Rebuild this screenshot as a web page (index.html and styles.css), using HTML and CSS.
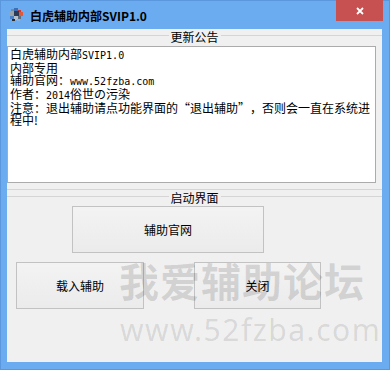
FILE: index.html
```html
<!DOCTYPE html>
<html lang="zh-CN">
<head>
  <meta charset="UTF-8" />
  <title>白虎辅助内部SVIP1.0</title>
  <link rel="stylesheet" href="styles.css">
</head>
<body>

  <div class="window">
    <div class="titlebar">
      <svg class="app-icon" width="16" height="16" viewBox="0 0 16 16">
        <rect x="3" y="2" width="3" height="2" fill="#7a8a99"/>
        <rect x="6" y="1" width="4" height="3" fill="#3b6fb5"/>
        <rect x="10" y="3" width="3" height="2" fill="#c43a3a"/>
        <rect x="1" y="5" width="5" height="4" fill="#9aa4ad"/>
        <rect x="6" y="4" width="5" height="5" fill="#2d3b55"/>
        <rect x="11" y="5" width="4" height="4" fill="#e05a3a"/>
        <rect x="2" y="9" width="4" height="3" fill="#4a83c9"/>
        <rect x="6" y="9" width="4" height="4" fill="#b8c2cc"/>
        <rect x="10" y="9" width="3" height="3" fill="#5d6b7a"/>
        <rect x="4" y="12" width="3" height="2" fill="#2b2b2b"/>
        <rect x="9" y="12" width="3" height="2" fill="#8fb3e0"/>
      </svg>
      <span class="title">白虎辅助内部SVIP1.0</span>
      <div class="close-box">
        <svg width="8" height="8" viewBox="0 0 8 8">
          <path d="M1 1 L7 7 M7 1 L1 7" stroke="#fff" stroke-width="1.8"/>
        </svg>
      </div>
    </div>

    <div class="client">
      <div class="group group-notice">
        <div class="group-head"><span>更新公告</span></div>
        <div class="notice">白虎辅助内部<span class="en">SVIP1.0</span>
内部专用
辅助官网：<span class="en">www.52fzba.com</span>
作者：<span class="en">2014</span>俗世の污染
注意：退出辅助请点功能界面的“退出辅助”，否则会一直在系统进
程中!</div>
      </div>

      <div class="group group-start">
        <div class="group-head"><span>启动界面</span></div>
        <button class="btn btn-site">辅助官网</button>
        <div class="btn-row">
          <button class="btn btn-load">载入辅助</button>
          <button class="btn btn-close">关闭</button>
        </div>
      </div>

      <div class="watermark">
        <div class="wm-name">我爱辅助论坛</div>
        <div class="wm-url">www.52fzba.com</div>
      </div>
    </div>
  </div>

</body>
</html>
```

FILE: styles.css
```css
* {
  box-sizing: border-box;
}

body {
  margin: 0;
  font-family: "Noto Sans CJK SC", sans-serif;
  font-size: 12px;
  color: #000;
  text-spacing-trim: space-all;
}

.window {
  width: 390px;
  height: 370px;
  border: 1px solid #5b97dd;
  background: #6babf0;
  padding: 0 7px 7px 6px;
  display: flex;
  flex-direction: column;
}

.titlebar {
  height: 28px;
  flex-shrink: 0;
  display: flex;
  align-items: center;
}

.app-icon {
  margin-left: 1px;
  margin-top: -1px;
}

.title {
  margin-left: 6px;
  font-size: 12px;
  font-weight: bold;
  line-height: 14px;
  margin-top: 2px;
}

.close-box {
  margin-left: auto;
  margin-right: -1px;
  align-self: flex-start;
  margin-top: -1px;
  width: 47px;
  height: 21px;
  background: #c75050;
  display: flex;
  align-items: center;
  justify-content: center;
}

.client {
  flex: 1;
  background: #f0f0f0;
  position: relative;
  overflow: hidden;
}

.group-head {
  height: 14px;
  display: flex;
  gap: 2px;
}

.group-head::before,
.group-head::after {
  content: "";
  flex: 1;
  height: 1px;
  margin-top: 6px;
  background: #d5d5d5;
}

.group-head span {
  padding-top: 1px;
  line-height: 13px;
  white-space: nowrap;
}

.group-notice {
  padding-bottom: 6px;
  border-bottom: 1px solid #d5d5d5;
}

.notice {
  margin-top: 3px;
  margin-right: 6px;
  height: 137px;
  border: 1px solid #ababab;
  background: #fff;
  padding: 1px 2px;
  line-height: 12px;
  white-space: pre;
  overflow: hidden;
}

.en {
  font-family: "DejaVu Sans Mono", monospace;
  font-size: 10px;
}

.btn {
  display: block;
  height: 47px;
  border: 1px solid #c2c2c2;
  background: linear-gradient(#f3f3f3, #ebebeb);
  font-family: inherit;
  font-size: 12px;
  color: #000;
  padding: 0;
}

.btn-site {
  margin-top: 2px;
  margin-left: 65px;
  width: 192px;
}

.btn-row {
  margin-top: 9px;
  padding-left: 9px;
  display: flex;
  gap: 50px;
}

.btn-load {
  width: 128px;
}

.btn-close {
  width: 127px;
}

.watermark {
  position: absolute;
  left: 112px;
  top: 231px;
  pointer-events: none;
}

.wm-name {
  font-size: 40px;
  line-height: 40px;
  font-weight: bold;
  letter-spacing: 1px;
  color: rgba(0, 0, 0, 0.13);
  white-space: nowrap;
}

.wm-url {
  margin-top: 15px;
  padding-left: 1px;
  font-family: "Noto Sans", sans-serif;
  font-size: 30px;
  line-height: 30px;
  letter-spacing: 1.5px;
  color: rgba(0, 0, 0, 0.11);
  white-space: nowrap;
}
```
